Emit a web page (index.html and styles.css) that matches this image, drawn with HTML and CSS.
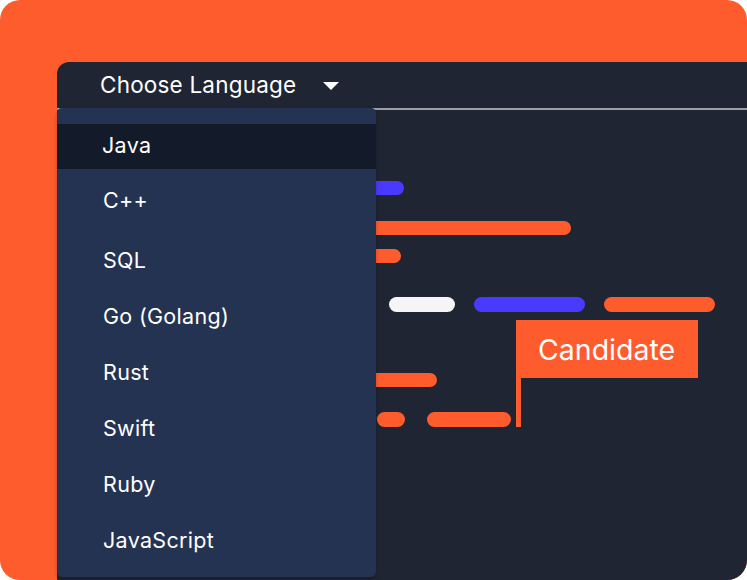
FILE: index.html
```html
<!DOCTYPE html>
<html lang="en">
<head>
<meta charset="utf-8">
<title>Choose Language</title>
<link rel="stylesheet" href="styles.css">
</head>
<body>
<div class="card">
  <div class="panel">
    <div class="header">
      <span class="header-label">Choose Language</span>
      <span class="caret"></span>
    </div>
    <div class="body">
      <div class="code">
        <div class="row r1"><span class="bar blue w84"></span></div>
        <div class="row r2"><span class="bar orange w251"></span></div>
        <div class="row r3"><span class="bar orange w81"></span></div>
        <div class="row r4">
          <span class="bar white w66"></span>
          <span class="bar blue w111"></span>
          <span class="bar orange w111"></span>
        </div>
        <div class="row r5"><span class="bar orange w117"></span></div>
        <div class="row r6">
          <span class="bar orange w28"></span>
          <span class="bar orange w84"></span>
        </div>
      </div>
      <div class="flag">
        <div class="flag-box">Candidate</div>
        <div class="flag-pole"></div>
      </div>
    </div>
    <ul class="dropdown">
      <li class="item active">Java</li>
      <li class="item cpp">C++</li>
      <li class="item">SQL</li>
      <li class="item">Go (Golang)</li>
      <li class="item">Rust</li>
      <li class="item">Swift</li>
      <li class="item">Ruby</li>
      <li class="item">JavaScript</li>
    </ul>
  </div>
</div>
</body>
</html>
```

FILE: styles.css
```css
* { box-sizing: border-box; }
html, body {
  margin: 0;
  padding: 0;
  background: #ffffff;
}
body {
  width: 747px;
  height: 580px;
  overflow: hidden;
  font-family: Inter, "Noto Sans", "Liberation Sans", sans-serif;
  color: #ffffff;
}
.card {
  width: 747px;
  height: 580px;
  background: #ff5c2e;
  border-radius: 20px;
  padding: 62px 0 0 57px;
  display: flex;
  overflow: hidden;
}
.panel {
  flex: 1;
  position: relative;
  background: #1f2533;
  border-top-left-radius: 12px;
  display: flex;
  flex-direction: column;
}
.header {
  height: 48px;
  border-bottom: 2px solid #9a9ea5;
  display: flex;
  align-items: center;
  padding: 0 0 0 43px;
}
.header-label {
  font-size: 22.5px;
  letter-spacing: 0.2px;
  line-height: 1;
}
.caret {
  margin-left: 27px;
  width: 0;
  height: 0;
  border-left: 8px solid transparent;
  border-right: 8px solid transparent;
  border-top: 8px solid #ffffff;
  margin-top: 2px;
}
.body {
  flex: 1;
  position: relative;
}
.code {
  display: flex;
  flex-direction: column;
  padding-top: 71px;
}
.row {
  display: flex;
  height: 14px;
  padding-left: 263px;
}
.r2 { margin-top: 26px; }
.r3 { margin-top: 14px; }
.r4 { margin-top: 34px; padding-left: 332px; gap: 19px; height: 15px; }
.r5 { margin-top: 61px; }
.r6 { margin-top: 25px; padding-left: 320px; gap: 22px; height: 15px; }
.bar {
  display: block;
  height: 100%;
  border-radius: 8px;
}
.orange { background: #ff5c2e; }
.blue { background: #4a3aff; }
.white { background: #f5f5f5; }
.w28 { width: 28px; }
.w66 { width: 66px; }
.w81 { width: 81px; }
.w84 { width: 84px; }
.w111 { width: 111px; }
.w117 { width: 117px; }
.w251 { width: 251px; }
.flag {
  position: absolute;
  left: 459px;
  top: 210px;
  display: flex;
  flex-direction: column;
}
.flag-box {
  width: 182px;
  height: 58px;
  background: #ff5c2e;
  font-size: 28.5px;
  line-height: 59px;
  padding-left: 22px;
  letter-spacing: 0;
}
.flag-pole {
  width: 5px;
  height: 49px;
  background: #ff5c2e;
}
.dropdown {
  position: absolute;
  left: 0;
  top: 46px;
  width: 319px;
  height: 469px;
  margin: 0;
  padding: 16px 0 0 0;
  list-style: none;
  background: #253352;
  border-radius: 5px;
  box-shadow: 0 2px 4px rgba(0, 0, 0, 0.25);
}
.item {
  height: 56px;
  display: flex;
  align-items: center;
  padding-left: 46px;
  font-size: 21.5px;
  letter-spacing: 0.3px;
}
.item.active {
  height: 45px;
  background: #131a29;
  margin-bottom: 3px;
  padding-left: 45px;
  padding-bottom: 3px;
}
.item.cpp { margin-bottom: 4px; }
```
